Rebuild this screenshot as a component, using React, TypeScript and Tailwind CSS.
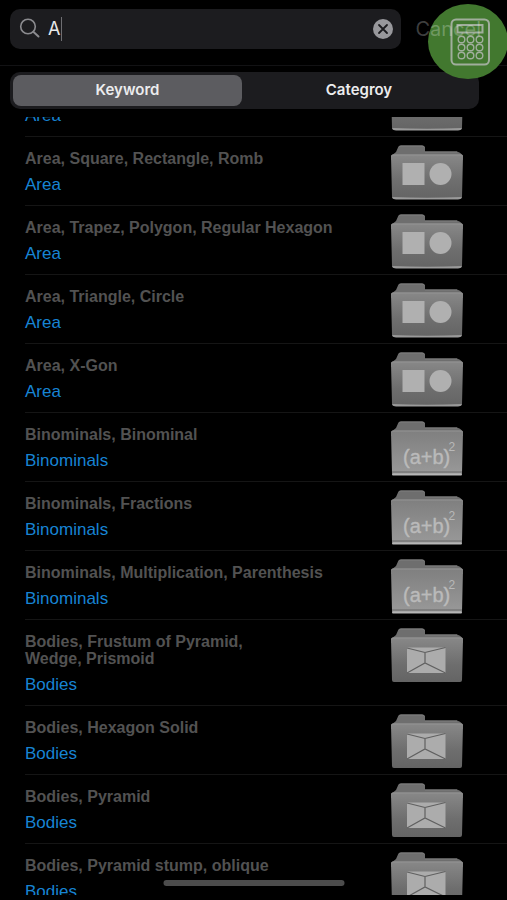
import { useState } from "react";

type IconKind = "area" | "binominals" | "bodies";

type Entry = { title: string; category: string; icon: IconKind };

const entries: Entry[] = [
  { title: "", category: "Area", icon: "area" },
  { title: "Area, Square, Rectangle, Romb", category: "Area", icon: "area" },
  { title: "Area, Trapez, Polygon, Regular Hexagon", category: "Area", icon: "area" },
  { title: "Area, Triangle, Circle", category: "Area", icon: "area" },
  { title: "Area, X-Gon", category: "Area", icon: "area" },
  { title: "Binominals, Binominal", category: "Binominals", icon: "binominals" },
  { title: "Binominals, Fractions", category: "Binominals", icon: "binominals" },
  { title: "Binominals, Multiplication, Parenthesis", category: "Binominals", icon: "binominals" },
  { title: "Bodies, Frustum of Pyramid,\nWedge, Prismoid", category: "Bodies", icon: "bodies" },
  { title: "Bodies, Hexagon Solid", category: "Bodies", icon: "bodies" },
  { title: "Bodies, Pyramid", category: "Bodies", icon: "bodies" },
  { title: "Bodies, Pyramid stump, oblique", category: "Bodies", icon: "bodies" },
];

function FolderIcon({ kind }: { kind: IconKind }) {
  const light = kind === "binominals";
  return (
    <svg viewBox="0 0 74 56" className="h-14 w-[74px] shrink-0" aria-hidden="true">
      <defs>
        <linearGradient id="folder-dark" x1="0" y1="0" x2="0" y2="1">
          <stop offset="0" stopColor="#888888" />
          <stop offset="0.6" stopColor="#6e6e6e" />
          <stop offset="1" stopColor="#646464" />
        </linearGradient>
        <linearGradient id="folder-light" x1="0" y1="0" x2="0" y2="1">
          <stop offset="0" stopColor="#7f7f7f" />
          <stop offset="1" stopColor="#999999" />
        </linearGradient>
      </defs>
      <path
        d="M1 11 L6 7 L8 2.500 Q9 0.500 11 0.500 H32 Q35 0.500 35 3 V6.500 H67 Q70 7 73 10.500 V15 H1Z"
        fill="#6e6e6e"
      />
      <path d="M8.500 2 Q9.500 1 11 1 H32 Q34 1 34.500 2.500 M35 7 H67" stroke="#7e7e7e" fill="none" />
      <path
        d="M1 11 Q1 9.500 3 9.500 H71 Q73 9.500 73 11.500 L72 52 Q72 54 70 54 H4 Q2 54 2 52Z"
        fill={light ? "url(#folder-light)" : "url(#folder-dark)"}
      />
      <path d="M1.500 11 Q2 10 4 10 H70 Q72 10 72.500 11" stroke="#949494" strokeWidth="1" fill="none" />
      {kind === "area" && (
        <>
          <path d="M2 52 Q37 53.500 72 52 Q71 54.500 68 54.500 H6 Q3 54.500 2 52Z" fill="#9a9a9a" />
          <rect x="12.500" y="18" width="22" height="22" fill="#b0b0b0" />
          <circle cx="50.500" cy="29" r="11" fill="#b0b0b0" />
        </>
      )}
      {kind === "binominals" && (
        <>
          <path d="M2 51 H72" stroke="#666" strokeWidth="1" />
          <path d="M3 53.500 H71" stroke="#b5b5b5" strokeWidth="2" strokeLinecap="round" />
          <text
            x="13"
            y="43"
            fontSize="20"
            fontFamily="Liberation Sans, sans-serif"
            fill="#bababa"
            stroke="#bababa"
            strokeWidth="0.4"
          >
            (a+b)
          </text>
          <text x="58.500" y="30" fontSize="12" fontFamily="Liberation Sans, sans-serif" fill="#b8b8b8">
            2
          </text>
        </>
      )}
      {kind === "bodies" && (
        <>
          <rect x="17" y="19.500" width="38.500" height="25.500" fill="#acacac" />
          <path
            d="M17 20 L35 24.500 L55.500 19.500 M35 24.500 V35 M17 45 L35 35 L55.500 45"
            fill="none"
            stroke="#606060"
            strokeWidth="1.200"
          />
        </>
      )}
    </svg>
  );
}

function CalculatorIcon() {
  return (
    <svg viewBox="0 0 40 48" className="h-12 w-10" fill="none" stroke="#a0ae9c" aria-hidden="true">
      <rect x="1.500" y="1.500" width="37.500" height="45" rx="4.500" strokeWidth="2" />
      <rect x="7.500" y="7" width="25" height="7.500" strokeWidth="2" />
      {[21.5, 29.5, 37.5].map((cy) =>
        [11.5, 20.5, 29.5].map((cx) => (
          <circle key={`${cx}-${cy}`} cx={cx} cy={cy} r="3.300" strokeWidth="1.400" />
        )),
      )}
    </svg>
  );
}

export default function App() {
  const [query, setQuery] = useState("A");
  const [tab, setTab] = useState("Keyword");

  return (
    <div className="relative flex h-screen flex-col overflow-hidden bg-black font-['Inter','Liberation_Sans',sans-serif]">
      <header className="shrink-0">
        <div className="flex items-center gap-[14px] border-b border-[#121214] pt-[9px] pr-[26px] pb-4 pl-[10px]">
          <div className="relative flex h-10 min-w-0 flex-1 items-center rounded-[10px] bg-[#1c1c1f] pr-2 pl-[9px]">
            <svg viewBox="0 0 22 22" className="size-[22px] shrink-0" fill="none" stroke="#8b8b8f" aria-hidden="true">
              <circle cx="9" cy="8.500" r="7.300" strokeWidth="1.600" />
              <path d="M14.300 13.800 L19.500 18.500" strokeWidth="2" strokeLinecap="round" />
            </svg>
            <input
              type="text"
              aria-label="Search"
              value={query}
              onChange={(e) => setQuery(e.target.value)}
              className="min-w-0 flex-1 bg-transparent pl-[7px] text-lg text-[#e8e8ea] caret-transparent outline-none"
            />
            <span className="absolute top-2 left-[51px] h-6 w-px bg-[#6e6e72]" />
            <button type="button" aria-label="Clear search" onClick={() => setQuery("")}>
              <svg viewBox="0 0 20 20" className="size-5" aria-hidden="true">
                <circle cx="10" cy="10" r="10" fill="#98989c" />
                <path d="M6 6 L14 14 M14 6 L6 14" stroke="#1c1c1f" strokeWidth="1.800" strokeLinecap="round" />
              </svg>
            </button>
          </div>
          <button type="button" className="relative z-20 text-xl leading-6 text-white/25">
            Cancel
          </button>
        </div>
        <div className="pt-[6px] pr-7 pb-2 pl-[10px]">
          <div className="grid h-[37px] grid-cols-[229fr_234fr] rounded-[10px] bg-[#1c1c1f] p-[3px] text-[15px] font-semibold text-[#ececee]">
            {["Keyword", "Categroy"].map((name) => (
              <button
                key={name}
                type="button"
                aria-pressed={tab === name}
                onClick={() => setTab(name)}
                className={tab === name ? "rounded-lg bg-[#5c5c60]" : "rounded-lg"}
              >
                {name}
              </button>
            ))}
          </div>
        </div>
      </header>

      <main className="mb-[5px] min-h-0 flex-1 overflow-hidden font-['Liberation_Sans',Arial,sans-serif]">
        <ul className="-mt-[49px]">
          {entries.map((entry, index) => (
            <li key={index} className="ml-[25px] flex items-start justify-between border-b border-[#151515] pr-[43px]">
              <div className="min-w-0 pt-[13px] pb-[10px]">
                <p className="min-h-[17px] text-base leading-[17px] font-bold whitespace-pre-line text-[#525252]">
                  {entry.title}
                </p>
                <a href="#" className="mt-2 block text-[17px] leading-5 text-[#1784d4]">
                  {entry.category}
                </a>
              </div>
              <div className="pt-2">
                <FolderIcon kind={entry.icon} />
              </div>
            </li>
          ))}
        </ul>
      </main>

      <button
        type="button"
        aria-label="Calculator"
        className="absolute top-1 -right-px z-10 flex h-[75px] w-20 items-center justify-center rounded-[50%] bg-[#42782f] pl-[3px]"
      >
        <CalculatorIcon />
      </button>
      <div className="absolute bottom-[14px] left-1/2 h-[6px] w-[181px] -translate-x-1/2 rounded-full bg-[#4c4c4c]" />
    </div>
  );
}
